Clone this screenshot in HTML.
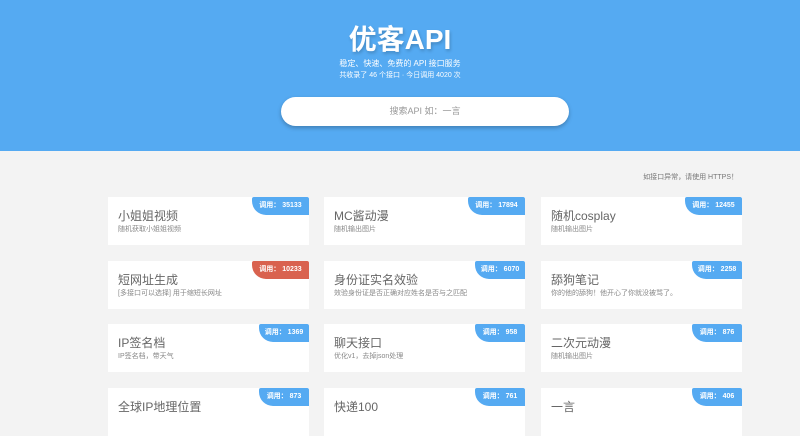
<!DOCTYPE html>
<html><head><meta charset="utf-8"><style>
*{margin:0;padding:0;box-sizing:border-box}
body{width:800px;height:415px;overflow:hidden;background:#f3f3f3;font-family:"Liberation Sans","Noto Sans CJK SC",sans-serif}
.hd{position:absolute;left:0;top:0;width:800px;height:151px;background:#55aaf2;text-align:center;color:#fff}
.t{position:absolute;top:18px;width:100%;font-size:28px;font-weight:bold;text-shadow:1px 2px 3px rgba(0,0,0,.2)}
.s1{position:absolute;top:58px;width:100%;font-size:8px}
.s2{position:absolute;top:70px;width:100%;font-size:7px}
.sb{position:absolute;left:281px;top:97px;width:288px;height:29px;background:#fff;border-radius:15px;box-shadow:0 2px 4px rgba(0,0,0,.25);color:#999;font-size:9px;line-height:29px;text-align:center}
.nt{position:absolute;right:62px;top:172px;font-size:7px;color:#777}
.c{position:absolute;width:201px;height:48px;background:#fff}
.c b{position:absolute;left:10px;top:10px;font-size:12px;font-weight:normal;color:#666}
.c i{position:absolute;left:10px;top:27px;font-size:7px;font-style:normal;color:#888}
.c u{position:absolute;right:0;top:0;height:18px;width:57px;background:#55aaf2;border-radius:2px 2px 0 14px;color:#fff;font-size:7px;font-weight:bold;text-decoration:none;line-height:18px;text-align:center}
.c u.s{width:50px}
.c u.r{background:#d9624f}
</style></head><body>
<div class="hd"><div class="t">优客API</div><div class="s1">稳定、快速、免费的 API 接口服务</div><div class="s2">共收录了 46 个接口 · 今日调用 4020 次</div><div class="sb">搜索API 如：一言</div></div>
<div class="nt">如接口异常，请使用 HTTPS！</div>
<div class="c" style="left:108px;top:197px"><b>小姐姐视频</b><i>随机获取小姐姐视频</i><u>调用： 35133</u></div>
<div class="c" style="left:324px;top:197px"><b>MC酱动漫</b><i>随机输出图片</i><u>调用： 17894</u></div>
<div class="c" style="left:541px;top:197px"><b>随机cosplay</b><i>随机输出图片</i><u>调用： 12455</u></div>
<div class="c" style="left:108px;top:261px"><b>短网址生成</b><i>[多接口可以选择]  用于缩短长网址</i><u class="r">调用： 10233</u></div>
<div class="c" style="left:324px;top:261px"><b>身份证实名效验</b><i>效验身份证是否正确对应姓名是否与之匹配</i><u class="s">调用： 6070</u></div>
<div class="c" style="left:541px;top:261px"><b>舔狗笔记</b><i>你的他的舔狗！他开心了你就没被骂了。</i><u class="s">调用： 2258</u></div>
<div class="c" style="left:108px;top:324px"><b>IP签名档</b><i>IP签名档，带天气</i><u class="s">调用： 1369</u></div>
<div class="c" style="left:324px;top:324px"><b>聊天接口</b><i>优化v1，去掉json处理</i><u class="s">调用： 958</u></div>
<div class="c" style="left:541px;top:324px"><b>二次元动漫</b><i>随机输出图片</i><u class="s">调用： 876</u></div>
<div class="c" style="left:108px;top:388px"><b>全球IP地理位置</b><i></i><u class="s">调用： 873</u></div>
<div class="c" style="left:324px;top:388px"><b>快递100</b><i></i><u class="s">调用： 761</u></div>
<div class="c" style="left:541px;top:388px"><b>一言</b><i></i><u class="s">调用： 406</u></div>
</body></html>
